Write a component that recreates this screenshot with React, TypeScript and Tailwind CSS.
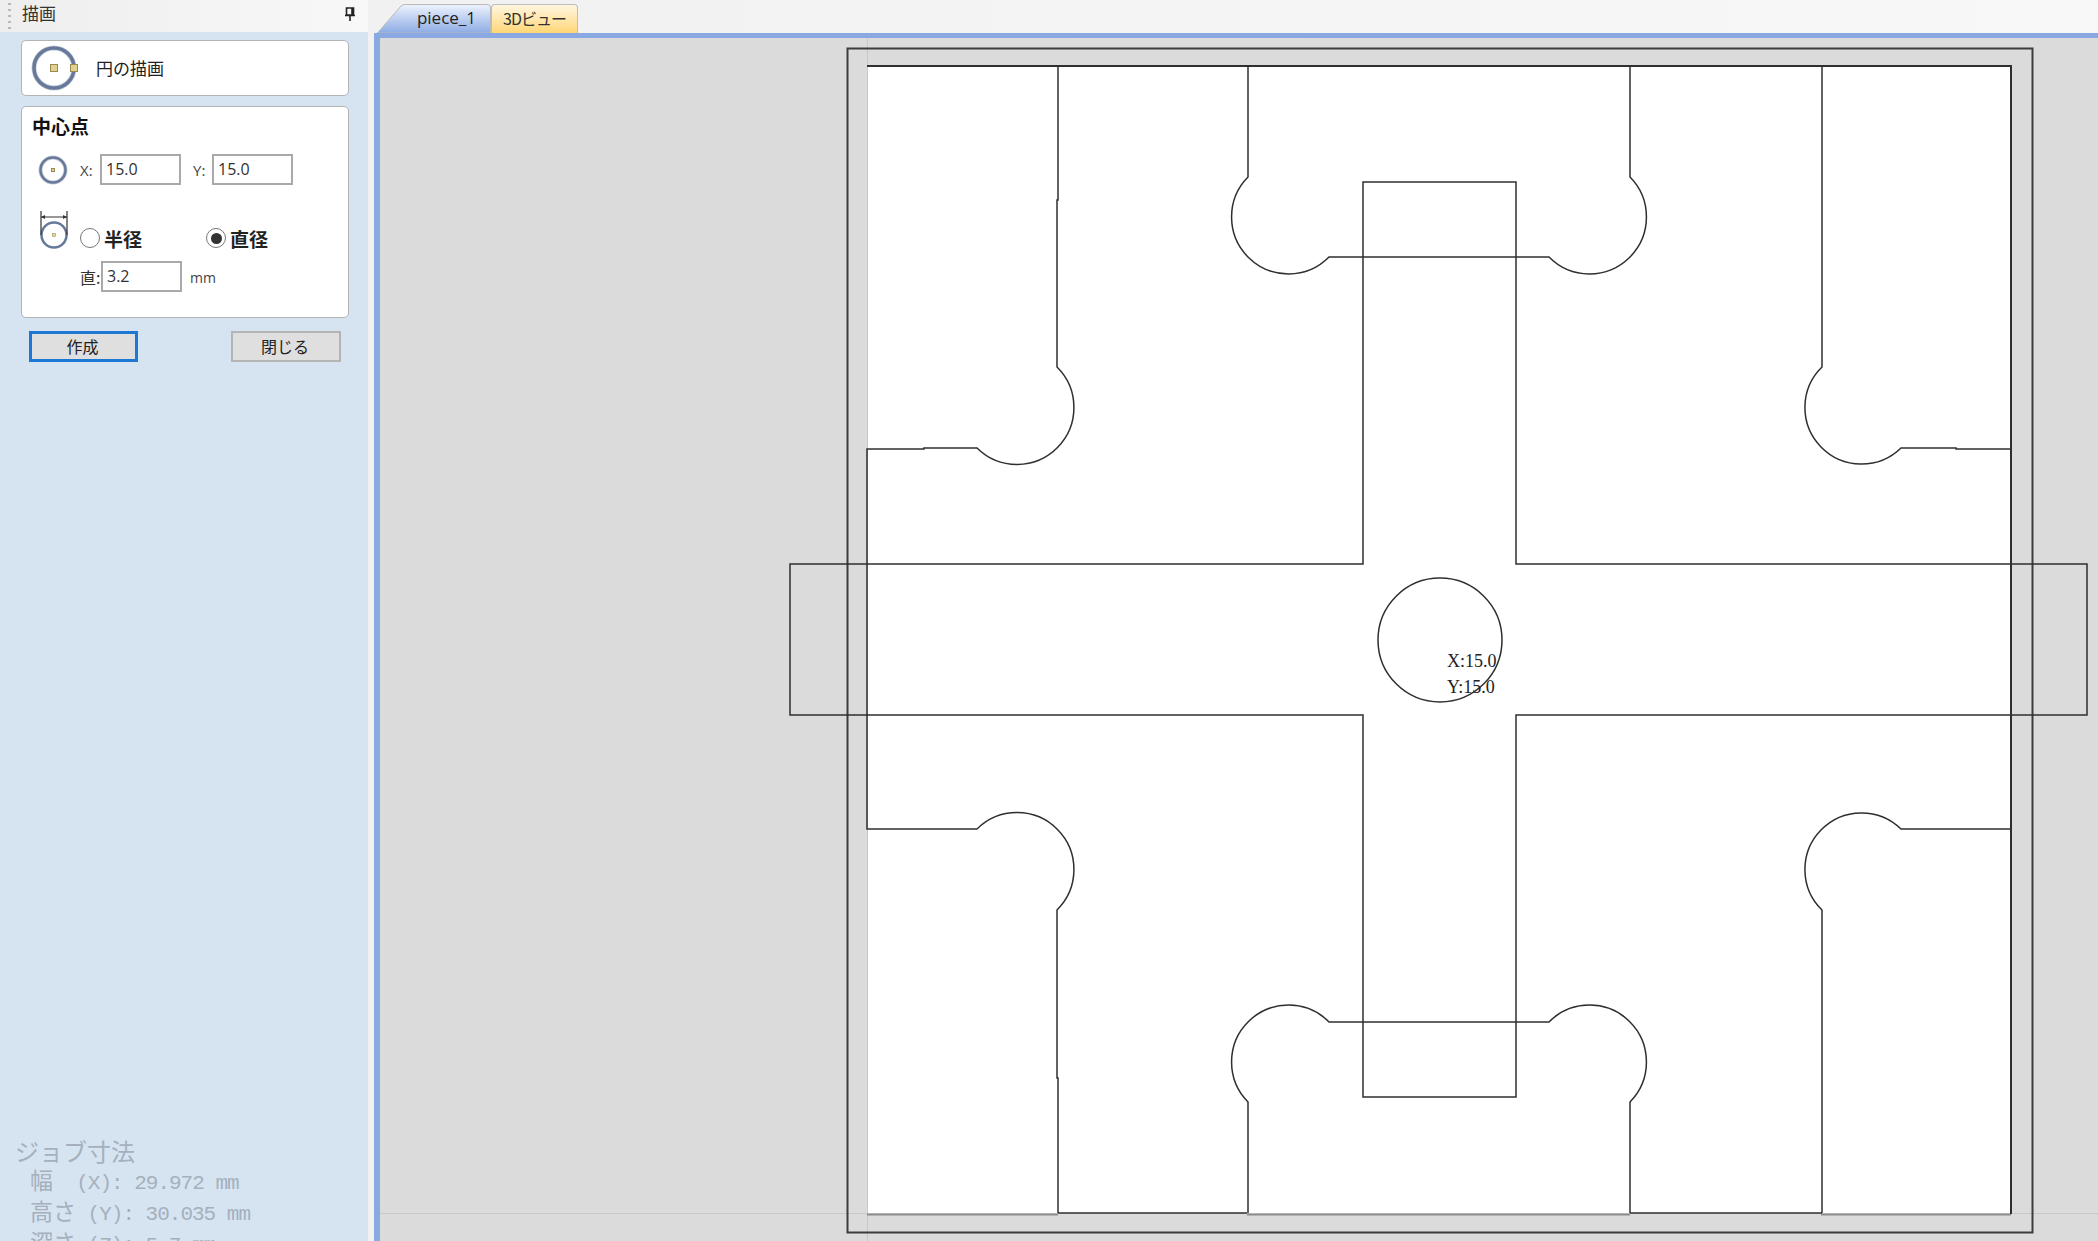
import React from 'react';

const uiFont = { fontFamily: '"Open Sans", "Noto Sans CJK JP", sans-serif' };
const jpFont = { fontFamily: '"Noto Sans CJK JP", "Open Sans", sans-serif' };

const crossTop =
  'M1058,66 V200 H1057 V367 A56,56 0 0 1 977,448 H924 V449 H867 V564 H1363 V182 H1516 V564 H2011 V449 H1956 V448 H1901 A56,56 0 0 1 1822,367 V66';
const slotTop = 'M1248,66 V177 A56,56 0 0 0 1329,257 H1549 A56,56 0 0 0 1630,177 V66';
const crossBottom =
  'M1058,1213 V1078 H1057 V910 A56,56 0 0 0 977,829 H867 V715 H1363 V1097 H1516 V715 H2011 V829 H1901 A56,56 0 0 0 1822,910 V1213';
const slotBottom = 'M1248,1213 V1102 A56,56 0 0 1 1329,1022 H1549 A56,56 0 0 1 1630,1102 V1213';

function CircleIcon({ size, r, stroke, dot, edgeDot }: { size: number; r: number; stroke: number; dot: number; edgeDot?: boolean }) {
  const c = size / 2;
  return (
    <svg width={size} height={size} viewBox={`0 0 ${size} ${size}`} className="shrink-0">
      <circle cx={c} cy={c} r={r} fill="none" stroke="#c9ced8" strokeWidth={stroke + 1.5} />
      <circle cx={c} cy={c} r={r} fill="none" stroke="#66799b" strokeWidth={stroke} />
      <rect x={c - dot / 2} y={c - dot / 2} width={dot} height={dot} fill="#e3d08c" stroke="#9a8a52" strokeWidth="1" />
      {edgeDot && <rect x={c + r - dot / 2} y={c - dot / 2} width={dot} height={dot} fill="#e3d08c" stroke="#9a8a52" strokeWidth="1" />}
    </svg>
  );
}

function DiameterIcon() {
  return (
    <svg width="30" height="40" viewBox="0 0 30 40" className="shrink-0">
      <circle cx="15" cy="25" r="12.5" fill="none" stroke="#66799b" strokeWidth="2.5" />
      <rect x="13.5" y="23.5" width="3" height="3" fill="#e3d08c" stroke="#9a8a52" strokeWidth="0.5" />
      <path d="M2,1 V25 M28,1 V25 M2,7 H28" fill="none" stroke="#333" strokeWidth="1.2" />
      <path d="M2,7 L6,5 V9 Z M28,7 L24,5 V9 Z" fill="#333" />
    </svg>
  );
}

function Radio({ checked, label, className }: { checked?: boolean; label: string; className?: string }) {
  return (
    <div className={`flex items-center gap-[4px] ${className ?? ''}`}>
      <div className="flex h-[20px] w-[20px] items-center justify-center rounded-full border border-[#777] bg-white">
        {checked && <div className="h-[11px] w-[11px] rounded-full bg-[#333]" />}
      </div>
      <span className="text-[19px] font-bold leading-none text-[#222]" style={jpFont}>{label}</span>
    </div>
  );
}

function Field({ value }: { value: string }) {
  return (
    <input
      readOnly
      value={value}
      className="h-[31px] w-[81px] border-2 border-[#a9a9a9] bg-white pb-[2px] pl-[4px] text-[16px] text-[#333] outline-none"
      style={uiFont}
    />
  );
}

function Sidebar() {
  return (
    <aside className="flex h-full w-[368px] shrink-0 flex-col overflow-hidden bg-[#d6e4f2]">
      <div className="flex h-[32px] shrink-0 items-center bg-gradient-to-r from-[#eeeeee] to-[#f8f8f8] pl-[8px] pr-[12px]">
        <div className="flex h-[26px] w-[3px] flex-col justify-between">
          {[0, 1, 2, 3, 4].map((i) => (
            <div key={i} className="h-[2px] w-[3px] bg-[#b8b8b8]" />
          ))}
        </div>
        <span className="mb-[8px] ml-[11px] text-[17px] leading-none text-[#333]" style={jpFont}>描画</span>
        <svg width="12" height="14" viewBox="0 0 12 14" className="mb-[5px] ml-auto">
          <path d="M2.5,1 H9.5 V8 H2.5 Z M8,1.5 V8 M1,8.5 H11 M6,8.5 V14" fill="none" stroke="#222" strokeWidth="1.6" />
        </svg>
      </div>

      <div className="ml-[21px] mt-[8px] flex h-[56px] w-[328px] shrink-0 items-center rounded-[5px] border border-[#b4b4b4] bg-white pl-[8px]">
        <CircleIcon size={48} r={20} stroke={3.5} dot={7} edgeDot />
        <span className="mb-[1px] ml-[18px] text-[17px] leading-none text-[#222]" style={jpFont}>円の描画</span>
      </div>

      <div className="ml-[21px] mt-[10px] h-[212px] w-[328px] shrink-0 rounded-[5px] border border-[#b4b4b4] bg-white pl-[10px]">
        <div className="pt-[8px] text-[19px] font-bold leading-[22px] text-[#111]" style={jpFont}>中心点</div>
        <div className="mt-[17px] flex items-center">
          <div className="ml-[6px] flex w-[37px]">
            <CircleIcon size={30} r={12.5} stroke={2.5} dot={3} />
          </div>
          <span className="w-[25px] pl-[5px] pt-[2px] text-[15px] text-[#444]" style={uiFont}>X:</span>
          <Field value="15.0" />
          <span className="ml-[12px] w-[19px] pt-[2px] text-[15px] text-[#444]" style={uiFont}>Y:</span>
          <Field value="15.0" />
        </div>
        <div className="mt-[25px] flex h-[40px] items-end">
          <div className="ml-[7px] w-[31px]">
            <DiameterIcon />
          </div>
          <Radio label="半径" className="ml-[10px] w-[126px] pb-[2px]" />
          <Radio checked label="直径" className="pb-[2px]" />
        </div>
        <div className="mt-[11px] flex items-center">
          <span className="ml-[48px] w-[21px] text-[16px] text-[#333]" style={jpFont}>直:</span>
          <Field value="3.2" />
          <span className="ml-[8px] pt-[2px] text-[14px] text-[#444]" style={uiFont}>mm</span>
        </div>
      </div>

      <div className="ml-[29px] mt-[13px] flex w-[312px] shrink-0 justify-between">
        <button className="h-[31px] w-[109px] border-[3px] border-[#1c78d2] bg-[#dfdfdf] pb-[2px] pr-[2px] text-[16px] leading-none text-[#222]" style={jpFont}>作成</button>
        <button className="h-[31px] w-[110px] border-2 border-[#b4b4b4] bg-[#dfdfdf] pb-[2px] pr-[2px] text-[16px] leading-none text-[#222]" style={jpFont}>閉じる</button>
      </div>

      <div className="ml-[15px] mt-[779px] shrink-0 whitespace-pre leading-[30px] tracking-[-1px] text-[#a5b0bc]" style={{ fontFamily: '"Liberation Mono", "Noto Sans CJK JP", monospace', fontSize: 21 }}>
        <div className="h-[27px] leading-[27px]"><span className="text-[24px] tracking-normal">ジョブ寸法</span></div>
        <div className="pl-[15px]"><span className="text-[23px] tracking-normal">幅</span>{'  (X): 29.972 mm'}</div>
        <div className="pl-[15px]"><span className="text-[23px] tracking-normal">高さ</span>{' (Y): 30.035 mm'}</div>
        <div className="pl-[15px]"><span className="text-[23px] tracking-normal">深さ</span>{' (Z): 5.7 mm'}</div>
      </div>
    </aside>
  );
}

function Tabs() {
  return (
    <div className="flex h-[33px] shrink-0 items-end bg-gradient-to-r from-[#f1f1f1] to-[#f8f8f8]">
      <div className="relative ml-[3px] flex h-[29px] w-[114px] items-center justify-end pr-[15px]">
        <svg width="114" height="29" viewBox="0 0 114 29" className="absolute left-0 top-0">
          <defs>
            <linearGradient id="tabBlue" x1="0" y1="0" x2="0" y2="1">
              <stop offset="0" stopColor="#eef3fd" />
              <stop offset="1" stopColor="#8dabe4" />
            </linearGradient>
          </defs>
          <path d="M0.5,29 L24,2 Q25.5,0.5 28,0.5 H110 Q113,0.5 113.5,3 V29 Z" fill="url(#tabBlue)" stroke="#b9b9b9" />
        </svg>
        <span className="relative mb-[2px] text-[17px] leading-none text-[#222]" style={uiFont}>piece_1</span>
      </div>
      <div className="flex h-[29px] w-[87px] items-center justify-center rounded-t-[4px] border border-b-0 border-[#bdbdbd] bg-gradient-to-b from-[#fff6e0] to-[#ffd672]">
        <span className="mb-[2px] text-[16px] leading-none tracking-[-1px] text-[#333]" style={jpFont}>3Dビュー</span>
      </div>
    </div>
  );
}

function Drawing() {
  return (
    <svg width="1718" height="1203" viewBox="380 38 1718 1203" className="block">
      <rect x="867" y="66" width="1144" height="1147" fill="#fff" />
      {/* guide lines */}
      <path d="M380,1213.5 H867 M2011,1213.5 H2098 M867.5,38 V1241" fill="none" stroke="#c8c8c8" strokeWidth="1" />
      <path d="M867,1214.5 H1058 M1247,1214.5 H1630 M1821,1214.5 H2011" fill="none" stroke="#8c8c8c" strokeWidth="2" />
      <g fill="none" stroke="#2f2f2f" strokeWidth="1.5">
        <rect x="847.5" y="48.5" width="1185" height="1184" strokeWidth="2" stroke="#3c3c3c" />
        <path d="M867,66 H2011 V1214" strokeWidth="2" />
        <path d={crossTop} />
        <path d={slotTop} />
        <path d={crossBottom} />
        <path d={slotBottom} />
        <path d="M1058,1213 H1247 M1822,1213 H1630" />
        <path d="M867,564 H790 V715 H867 V564 M2011,564 H2087 V715 H2011" />
        <circle cx="1440" cy="640" r="62" />
      </g>
      <text x="1447" y="667" fontFamily='"Liberation Serif", serif' fontSize="18" fill="#222">X:15.0</text>
      <text x="1447" y="693" fontFamily='"Liberation Serif", serif' fontSize="18" fill="#222">Y:15.0</text>
    </svg>
  );
}

export default function App() {
  return (
    <div className="flex h-[1241px] w-[2098px] overflow-hidden bg-[#f1f1f1]">
      <Sidebar />
      <div className="flex min-w-0 flex-1 flex-col pl-[6px]">
        <Tabs />
        <div className="min-h-0 flex-1 overflow-hidden border-t-[5px] border-l-[6px] border-[#8aa9e3] bg-[#dbdbdb]">
          <Drawing />
        </div>
      </div>
    </div>
  );
}
